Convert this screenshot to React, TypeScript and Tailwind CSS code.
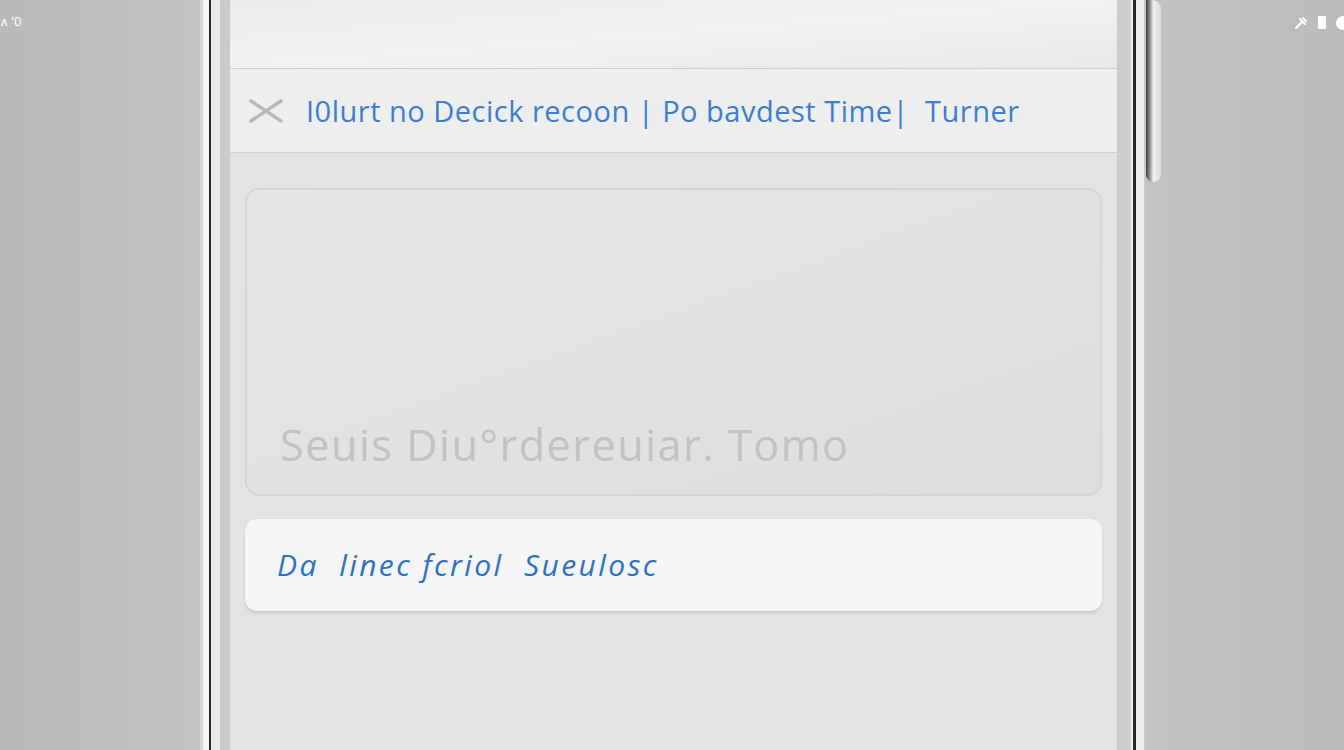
import React from "react";

const Bezel = ({side}: {side: "left" | "right"}) => {
  // thin chrome stripes of the phone frame
  if (side === "left") {
    return (
      <div className="flex h-full shrink-0">
        <div className="w-[3px] bg-[#d4d4d4]" />
        <div className="w-[6px] bg-[#f4f4f4]" />
        <div className="w-[2px] bg-[#2a2a2a]" />
        <div className="w-[9px] bg-[#ebebeb]" />
        <div className="w-[10px] bg-[#cbcbcb]" />
      </div>
    );
  }
  return (
    <div className="flex h-full shrink-0">
      <div className="w-[14px] bg-[#cdcdcd]" />
      <div className="w-[2px] bg-[#f0f0f0]" />
      <div className="w-[3px] bg-[#262626]" />
      <div className="w-[8px] bg-[#ececec]" />
      <div className="w-[2px] bg-[#c9c9c9]" />
    </div>
  );
};

const App = () => {
  return (
    <div
      className="w-[1344px] h-[750px] flex overflow-hidden bg-[#bdbdbd]"
      style={{fontFamily: '"Open Sans", "Noto Sans", sans-serif'}}
    >
      {/* left backdrop */}
      <div className="w-[200px] h-full shrink-0 bg-gradient-to-r from-[#b9b9b9] to-[#c2c2c2]">
        <div className="pt-[12px] pl-[1px] text-[13px] leading-[18px] text-white tracking-wide">
          ᴧ ʼ0
        </div>
      </div>

      <Bezel side="left" />

      {/* screen */}
      <div className="w-[887px] h-full shrink-0 flex flex-col bg-[#e3e3e3]">
        <div className="h-[69px] shrink-0 bg-gradient-to-br from-[#ebebeb] via-[#f1f1f1] to-[#e8e8e8] border-b border-[#cfcfcf]" />
        <div className="h-[84px] shrink-0 flex items-center bg-[#eeeeee] border-b border-[#d2d2d2] pl-[18px]">
          <svg width="36" height="26" viewBox="0 0 36 26" className="shrink-0">
            <path d="M3 3 L33 23 M33 3 L3 23" stroke="#b9b9b9" strokeWidth="3.5" strokeLinecap="round" />
          </svg>
          <span className="ml-[22px] text-[29px] leading-none text-[#3a7fd1] whitespace-nowrap tracking-[0.5px]">
            I0lurt no Decick recoon | Po bavdest Time|&nbsp; Turner
          </span>
        </div>

        <div className="flex-1 flex flex-col px-[15px] pt-[35px]">
          <div className="h-[308px] rounded-[14px] border-2 border-[#d6d6d6] bg-gradient-to-br from-[#e6e6e6] via-[#e2e2e2] to-[#dedede] flex items-end pl-[33px] pb-[28px]">
            <span className="text-[43px] leading-none text-[#c3c3c3] whitespace-nowrap tracking-[1.6px]">
              Seuis Diu°rdereuiar. Tomo
            </span>
          </div>
          <div className="mt-[23px] h-[92px] rounded-[12px] bg-[#f5f5f5] shadow-[0_2px_3px_rgba(0,0,0,0.12)] flex items-center pl-[32px]">
            <span className="text-[30px] leading-none italic text-[#2f72c4] whitespace-nowrap tracking-[2.4px]">
              Da&nbsp; linec fcriol&nbsp; Sueulosc
            </span>
          </div>
        </div>
      </div>

      <Bezel side="right" />

      {/* right backdrop with side button */}
      <div className="flex-1 h-full flex bg-gradient-to-r from-[#c2c2c2] to-[#bbbbbb]">
        <div className="w-[15px] h-[182px] shrink-0 rounded-b-[10px] rounded-tr-[12px] bg-gradient-to-r from-[#3a3a3a] via-[#f2f2f2] to-[#dcdcdc]" />
        <div className="flex-1 flex justify-end items-start pt-[16px] gap-[10px]">
          <svg width="14" height="14" viewBox="0 0 14 14">
            <path d="M2 12 L8 6 M6 3 L11 8 M9 2 L12 5" stroke="#fff" strokeWidth="2" strokeLinecap="round" />
          </svg>
          <div className="w-[8px] h-[13px] bg-white rounded-[1px]" />
          <div className="w-[14px] h-[14px] bg-white rounded-full -mr-[6px]" />
        </div>
      </div>
    </div>
  );
};

export default App;
